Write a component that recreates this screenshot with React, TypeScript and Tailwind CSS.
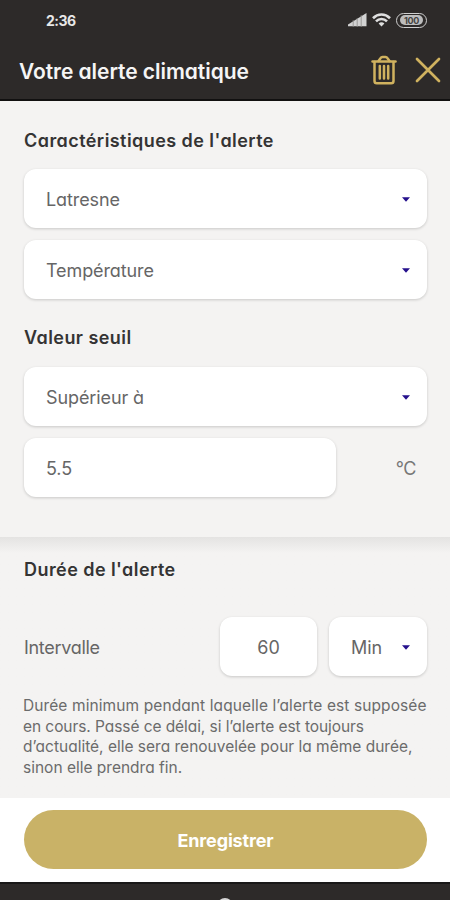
import type { ReactNode } from 'react';

function StatusBar() {
    return (
        <div className="flex h-10 items-center justify-between pr-[23px] pl-[46px] text-[#e8e8e8]">
            <span className="pt-px text-sm font-bold tracking-[-0.5px]">2:36</span>
            <div className="flex items-center gap-[5px]">
                <svg width="19" height="14" viewBox="0 0 19 14" fill="none">
                    <path d="M0 13.2V11.5L18.5 0V13.2Z" fill="#d2d2d2" />
                    <path
                        d="M5.2 7V14M9.2 5V14M13.2 2V14"
                        stroke="#8b8988"
                        strokeWidth="0.8"
                    />
                </svg>
                <svg
                    width="19"
                    height="14"
                    viewBox="0 0 19 14"
                    fill="none"
                    stroke="#dedede"
                    strokeWidth="2.6"
                >
                    <path d="M1 5.2C6 0.3 13 0.3 18 5.2" />
                    <path d="M4 8.3C7 5.3 12 5.3 15 8.3" />
                    <path
                        d="M6.6 10.4C8.2 8.9 10.8 8.9 12.4 10.4L9.5 13.6Z"
                        fill="#dedede"
                        stroke="none"
                    />
                </svg>
                <span className="flex h-[15px] w-[31px] items-center justify-center rounded-full border-[1.5px] border-[#cfcfcf] px-[3px] py-[1.5px]">
                    <span className="flex h-full w-full items-center justify-center rounded-full bg-[#bdbdbd] text-[9px] leading-none font-bold tracking-[-0.3px] text-[#454342]">
                        100
                    </span>
                </span>
            </div>
        </div>
    );
}

function Header() {
    return (
        <header className="flex h-[61px] items-center justify-between border-b-2 border-[#111010] pr-[9px] pl-[19px]">
            <h1 className="pt-[3px] text-[21px] leading-none font-semibold tracking-[-0.05px] text-[#f5f5f5]">
                Votre alerte climatique
            </h1>
            <div className="flex items-center gap-[18px] text-[#d0b25f]">
                <svg
                    width="26"
                    height="30"
                    viewBox="0 0 26 30"
                    fill="none"
                    stroke="currentColor"
                    strokeWidth="2.5"
                    strokeLinecap="round"
                    strokeLinejoin="round"
                >
                    <path d="M1.5 6.5H24.5" />
                    <path d="M7.5 6L9.5 3.2C10 2.4 10.6 2 11.5 2H14.5C15.4 2 16 2.4 16.5 3.2L18.5 6" />
                    <path d="M3.5 7V26C3.5 27.5 4.3 28.3 5.8 28.3H20.2C21.7 28.3 22.5 27.5 22.5 26V7" />
                    <path d="M8.8 11V23.5M13 11V23.5M17.2 11V23.5" />
                </svg>
                <svg
                    width="26"
                    height="26"
                    viewBox="0 0 26 26"
                    fill="none"
                    stroke="currentColor"
                    strokeWidth="2.7"
                    strokeLinecap="round"
                >
                    <path d="M2 2L24 24M24 2L2 24" />
                </svg>
            </div>
        </header>
    );
}

function SectionTitle({ children }: { children: ReactNode }) {
    return (
        <h2 className="relative top-px text-[18px] leading-6 font-semibold tracking-[0.44px] text-[#343434]">
            {children}
        </h2>
    );
}

function Caret() {
    return (
        <svg width="8" height="5" viewBox="0 0 8 5" className="shrink-0">
            <path d="M0 0.3H8L4 4.7Z" fill="#25108c" />
        </svg>
    );
}

const box =
    'flex h-[59px] items-center rounded-xl bg-white pt-px text-[18px] tracking-[-0.1px] text-[#666] shadow-[0_1px_3px_rgba(0,0,0,0.18)]';

function SelectField({ value }: { value: string }) {
    return (
        <button
            type="button"
            className={`${box} w-full justify-between pr-[17px] pl-[22px]`}
        >
            <span>{value}</span>
            <Caret />
        </button>
    );
}

export default function App() {
    return (
        <div className="flex h-[900px] w-[450px] flex-col overflow-hidden bg-[#f4f3f2] font-['Inter','Lato',sans-serif] [font-feature-settings:'cv11']">
            <div className="bg-[#2d2a29]">
                <StatusBar />
                <Header />
            </div>

            <main className="flex flex-1 flex-col">
                <section className="h-[436px] pt-[27px] pr-[23px] pl-6">
                    <SectionTitle>Caractéristiques de l'alerte</SectionTitle>
                    <div className="mt-[17px] flex flex-col gap-3">
                        <SelectField value="Latresne" />
                        <SelectField value="Température" />
                    </div>
                    <div className="mt-[26px]">
                        <SectionTitle>Valeur seuil</SectionTitle>
                    </div>
                    <div className="mt-[18px] flex flex-col gap-3">
                        <SelectField value="Supérieur à" />
                        <div className="flex items-center justify-between pr-[11px]">
                            <div className={`${box} w-[312px] pl-[22px]`}>
                                5.5
                            </div>
                            <span className="pt-px text-[18px] tracking-[-0.4px] text-[#777]">
                                °C
                            </span>
                        </div>
                    </div>
                </section>

                <section className="h-[261px] bg-linear-to-b from-[#e4e3e2] to-[#f4f3f2] to-[16px] pt-5 pr-[23px] pl-6">
                    <SectionTitle>Durée de l'alerte</SectionTitle>
                    <div className="mt-9 flex items-center">
                        <span className="flex-1 pt-px text-[18px] tracking-[-0.3px] text-[#666]">
                            Intervalle
                        </span>
                        <div className={`${box} w-[97px] justify-center`}>
                            60
                        </div>
                        <button
                            type="button"
                            className={`${box} ml-3 w-[98px] justify-between pr-[17px] pl-[22px]`}
                        >
                            <span>Min</span>
                            <Caret />
                        </button>
                    </div>
                    <p className="mt-5 -ml-px text-[15.5px] leading-[20.5px] whitespace-nowrap text-[#6b6b6b]">
                        <span className="tracking-[0.1px]">
                            Durée minimum pendant laquelle l’alerte est supposée
                        </span>
                        <br />
                        <span className="tracking-[-0.07px]">
                            en cours. Passé ce délai, si l’alerte est toujours
                        </span>
                        <br />
                        d’actualité, elle sera renouvelée pour la même durée,
                        <br />
                        sinon elle prendra fin.
                    </p>
                </section>
            </main>

            <footer className="h-[84px] bg-white pt-3 pr-[23px] pl-6">
                <button
                    type="button"
                    className="h-[59px] w-full rounded-full bg-[#c9b267] pt-[2px] text-[18px] font-bold tracking-[-0.15px] text-white"
                >
                    Enregistrer
                </button>
            </footer>

            {/* Android navigation bar */}
            <div className="flex h-[18px] items-start justify-center overflow-hidden border-t-2 border-[#191818] bg-[#2d2a29] pt-[14px]">
                <span className="h-4 w-4 shrink-0 rounded-full border-2 border-[#d5d5d5]" />
            </div>
        </div>
    );
}
